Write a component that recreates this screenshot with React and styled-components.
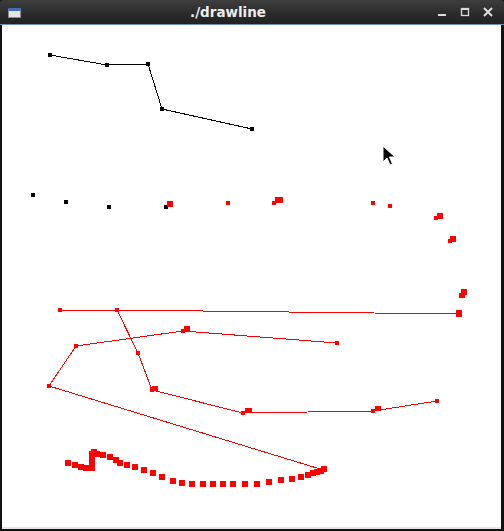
import React from 'react';
import styled, { createGlobalStyle } from 'styled-components';

const GlobalStyle = createGlobalStyle`
  html, body {
    margin: 0;
    padding: 0;
    background: #000;
  }
`;

const Window = styled.div`
  width: 504px;
  height: 531px;
  display: flex;
  flex-direction: column;
  background: #1a1a1a;
  box-sizing: border-box;
  overflow: hidden;
`;

const TitleBar = styled.header`
  height: 24px;
  display: grid;
  grid-template-columns: 60px 1fr 90px;
  align-items: center;
  background: linear-gradient(#3e3e3e, #2a2a2a 60%, #222);
  border-radius: 4px 4px 0 0;
  border-bottom: 1px solid #6d8fb8;
`;

const AppIcon = styled.div`
  width: 13px;
  height: 10px;
  margin-left: 8px;
  margin-top: 1px;
  background: #e4e4e4;
  border: 1px solid #8a8a8a;
  border-top: 3px solid #3e6fb6;
  border-radius: 1px;
  box-sizing: border-box;
`;

const Title = styled.h1`
  margin: 0;
  text-align: center;
  font-family: 'DejaVu Sans', sans-serif;
  font-weight: bold;
  font-size: 13.5px;
  color: #eeeeee;
  padding-right: 18px;
`;

const Controls = styled.div`
  display: flex;
  justify-content: flex-end;
  align-items: center;
  gap: 7px;
  padding-right: 8px;
`;

const ControlButton = styled.span`
  width: 16px;
  height: 16px;
  display: flex;
  align-items: center;
  justify-content: center;
`;

const Body = styled.main`
  flex: 1;
  display: flex;
  padding: 0 3px 2px 2px;
  background: #111;
`;

const Canvas = styled.div`
  flex: 1;
  background: #fff;
  border-bottom: 2px solid #e6e6e6;
  display: flex;
`;

const blackPath = [
  [50, 55], [107, 65], [148, 64], [162, 109], [252, 129],
];
const blackDots = [[33, 195], [66, 202], [109, 207], [166, 207]];

const redPaths = [
  [[60, 310], [117, 310], [459, 314]],
  [[117, 310], [138, 353], [152, 390], [243, 413], [373, 411], [437, 401]],
  [[337, 343], [183, 331], [76, 346], [49, 386], [320, 469]],
];

const redSmall = [
  [228, 203], [274, 203], [373, 203], [390, 206], [436, 218], [450, 241],
  [60, 310], [117, 310], [138, 353], [152, 390], [243, 413], [373, 411],
  [437, 401], [337, 343], [183, 331], [76, 346], [49, 386],
];

const redBig = [
  [170, 204, 6, 6], [279, 200, 8, 6], [440, 216, 6, 6], [453, 239, 6, 6],
  [464, 292, 6, 6], [462, 295, 6, 5], [459, 313, 6, 7], [155, 388, 6, 5],
  [248, 410, 7, 5], [378, 408, 6, 5], [187, 328, 6, 5],
];

const curve = [
  [68, 463], [75, 465], [81, 467], [86, 468], [90, 468], [92, 468], [92, 463],
  [92, 458], [92, 454], [94, 452], [97, 454], [103, 455], [110, 457],
  [116, 460], [120, 463], [127, 465], [135, 467], [144, 470], [153, 473],
  [162, 477], [173, 481], [182, 483], [192, 484], [203, 484], [213, 484],
  [223, 484], [233, 484], [245, 484], [257, 484], [269, 482], [281, 480],
  [292, 479], [301, 477], [308, 475], [313, 473], [317, 472], [321, 471],
  [324, 469],
];

const pts = (list) => list.map(([x, y]) => `${x},${y}`).join(' ');

const Drawing = () => (
  <svg width="499" height="500" viewBox="2 25 499 500" shapeRendering="crispEdges">
    <polyline points={pts(blackPath)} fill="none" stroke="#000" strokeWidth="1" />
    {blackPath.concat(blackDots).map(([x, y], i) => (
      <rect key={'b' + i} x={x - 2} y={y - 2} width="4" height="4" fill="#000" />
    ))}
    {redPaths.map((p, i) => (
      <polyline key={'rp' + i} points={pts(p)} fill="none" stroke="#f00" strokeWidth="1" />
    ))}
    {redSmall.map(([x, y], i) => (
      <rect key={'rs' + i} x={x - 2} y={y - 2} width="4" height="4" fill="#f00" />
    ))}
    {redBig.map(([x, y, w, h], i) => (
      <rect key={'rb' + i} x={x - w / 2} y={y - h / 2} width={w} height={h} fill="#f00" />
    ))}
    {curve.map(([x, y], i) => (
      <rect key={'c' + i} x={x - 3} y={y - 3} width="6" height="6" fill="#f00" />
    ))}
    <path
      d="M383 146 L383 162 L387 158 L390 165 L392.5 164 L389.5 157 L395 157 Z"
      fill="#000"
      stroke="#fff"
      strokeWidth="1"
      shapeRendering="geometricPrecision"
    />
  </svg>
);

const App = () => {
  return (
    <Window>
      <GlobalStyle />
      <TitleBar>
        <AppIcon />
        <Title>./drawline</Title>
        <Controls>
          <ControlButton>
            <svg width="10" height="10" viewBox="0 0 10 10">
              <rect x="1" y="7" width="8" height="2" fill="#dcdcdc" />
            </svg>
          </ControlButton>
          <ControlButton>
            <svg width="10" height="10" viewBox="0 0 10 10">
              <rect x="1.5" y="1.5" width="7" height="7" fill="none" stroke="#dcdcdc" strokeWidth="1.3" />
              <rect x="1" y="1" width="8" height="2" fill="#dcdcdc" />
            </svg>
          </ControlButton>
          <ControlButton>
            <svg width="10" height="10" viewBox="0 0 10 10">
              <path d="M1 1 L9 9 M9 1 L1 9" stroke="#dcdcdc" strokeWidth="2" />
            </svg>
          </ControlButton>
        </Controls>
      </TitleBar>
      <Body>
        <Canvas>
          <Drawing />
        </Canvas>
      </Body>
    </Window>
  );
};

export default App;
